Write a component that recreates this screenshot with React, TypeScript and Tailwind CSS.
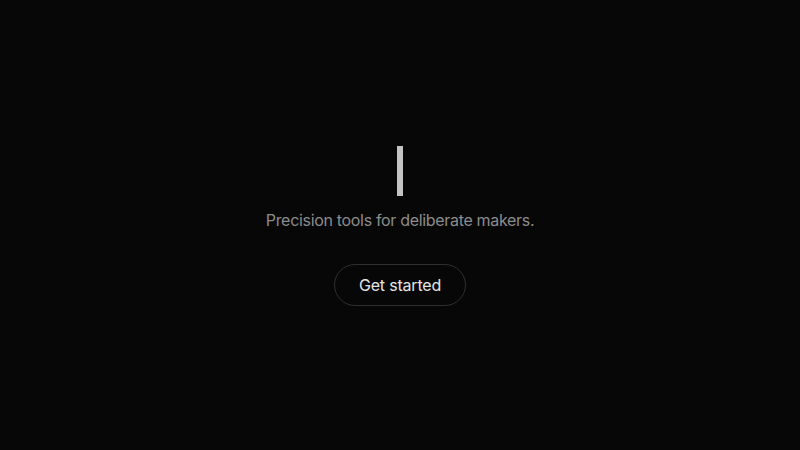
import React from "react";

export default function App() {
  return (
    <div
      className="w-[800px] h-[450px] bg-[#070707] flex flex-col items-center justify-center"
      style={{ fontFamily: "Inter, 'Liberation Sans', sans-serif" }}
    >
      <div className="mt-[2px] w-[6px] h-[50px] bg-[#c4c4c4]" />
      <p className="mt-[12px] text-[16px] leading-[24px] tracking-[-0.32px] text-[#8c8c8c]">
        Precision tools for deliberate makers.
      </p>
      <button className="mt-[32px] h-[42px] w-[132px] rounded-full border border-[#2e2e2e] text-[16px] tracking-[-0.2px] text-[#e5e5e5] bg-transparent">
        Get started
      </button>
    </div>
  );
}
